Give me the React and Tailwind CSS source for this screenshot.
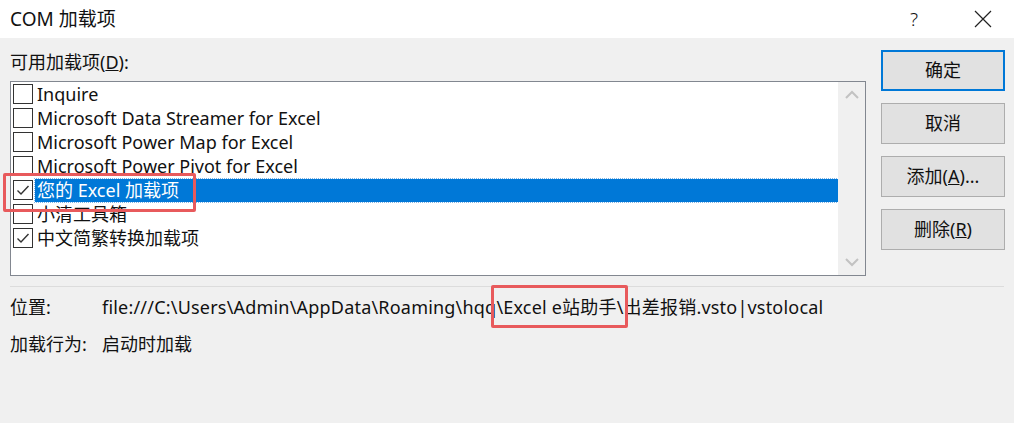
import React from "react";

const items = [
  { label: "Inquire", checked: false },
  { label: "Microsoft Data Streamer for Excel", checked: false },
  { label: "Microsoft Power Map for Excel", checked: false },
  { label: "Microsoft Power Pivot for Excel", checked: false },
  { label: "您的 Excel 加载项", checked: true, selected: true },
  { label: "小清工具箱", checked: false },
  { label: "中文简繁转换加载项", checked: true },
];

const Check = ({ checked }) => (
  <div className="w-[20px] h-[20px] border border-[#333] bg-white flex items-center justify-center shrink-0">
    {checked && (
      <svg width="16" height="16" viewBox="0 0 16 16" fill="none">
        <path d="M2.5 8.5 L6 12 L13.5 4" stroke="#333" strokeWidth="1.4" />
      </svg>
    )}
  </div>
);

const Btn = ({ children, primary }) => (
  <button
    className={`w-[124px] h-[41px] bg-[#e1e1e1] text-[18px] text-[#111] ${
      primary ? "border-2 border-[#0078d7]" : "border border-[#adadad]"
    }`}
  >
    {children}
  </button>
);

export default function App() {
  return (
    <div
      className="w-[1014px] h-[423px] bg-[#f0f0f0] flex flex-col text-[#111] overflow-hidden"
      style={{ fontFamily: '"Noto Sans", "Noto Sans CJK SC", sans-serif' }}
    >
      <div className="h-[38px] bg-white flex items-center pl-[10px] pr-[22px] text-[19px]">
        <span className="flex-1">COM 加载项</span>
        <span className="w-[20px] text-center mr-[50px] font-light">?</span>
        <svg width="18" height="18" viewBox="0 0 18 18">
          <path d="M1 1 L17 17 M17 1 L1 17" stroke="#222" strokeWidth="1.2" />
        </svg>
      </div>

      <div className="flex pl-[10px] pr-[9px]">
        <div className="flex-1 flex flex-col">
          <div className="h-[43px] pt-[12px] text-[18px] leading-[24px]">
            可用加载项(<span className="underline">D</span>):
          </div>
          <div className="relative w-[856px] h-[195px] border border-[#828790] bg-white flex">
            <div className="flex-1 pl-[2px]">
              {items.map((it) => (
                <div key={it.label} className="h-[24px] flex items-center">
                  <Check checked={it.checked} />
                  <span
                    className={`ml-[2px] pl-[2px] h-[23px] leading-[23px] text-[18px] ${
                      it.selected ? "bg-[#0078d7] text-white flex-1 outline outline-1 outline-dotted outline-[#7fb5e6]" : ""
                    }`}
                  >
                    {it.label}
                  </span>
                </div>
              ))}
            </div>
            <div className="w-[27px] bg-[#f0f0f0] flex flex-col justify-between items-center py-[8px]">
              <svg width="14" height="10" viewBox="0 0 14 10">
                <path d="M1 8 L7 2 L13 8" stroke="#c2c2c2" strokeWidth="2" fill="none" />
              </svg>
              <svg width="14" height="10" viewBox="0 0 14 10">
                <path d="M1 2 L7 8 L13 2" stroke="#c2c2c2" strokeWidth="2" fill="none" />
              </svg>
            </div>
            <div className="absolute left-[-8px] top-[91px] w-[193px] h-[39px] border-[3px] border-[#e85a5c] rounded-[2px]" />
          </div>
        </div>
        <div className="w-[124px] ml-[15px] pt-[12px] flex flex-col gap-[12px]">
          <Btn primary>确定</Btn>
          <Btn>取消</Btn>
          <Btn>
            添加(<span className="underline">A</span>)...
          </Btn>
          <Btn>
            删除(<span className="underline">R</span>)
          </Btn>
        </div>
      </div>

      <div className="mx-[10px] mt-[10px] border-t border-[#dcdcdc]" />

      <div className="pl-[10px] text-[18px]">
        <div className="flex h-[40px] items-center">
          <span className="w-[92px]">位置:</span>
          <span className="tracking-[0.2px]">
            file:///C:\Users\Admin\AppData\Roaming\hqq
            <span className="relative">
              \Excel e站助手\
              <span className="absolute left-[-5px] right-[-4px] top-[-10px] bottom-[-9px] border-[3px] border-[#e85a5c] rounded-[2px]" />
            </span>
            出差报销.vsto|vstolocal
          </span>
        </div>
        <div className="flex h-[34px] items-center">
          <span className="w-[92px]">加载行为:</span>
          <span>启动时加载</span>
        </div>
      </div>
    </div>
  );
}
